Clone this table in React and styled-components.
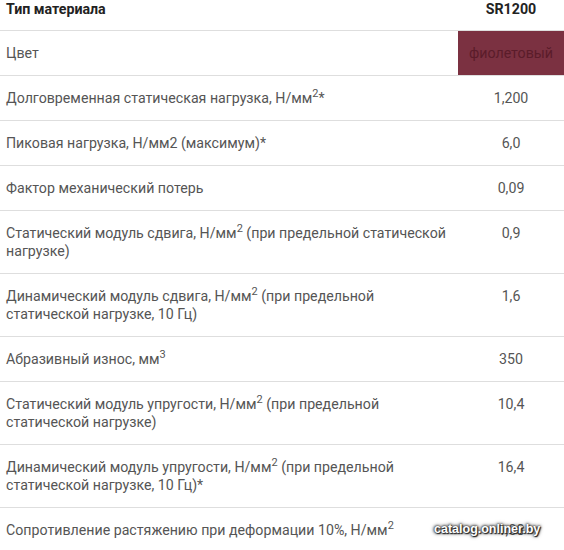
import React from 'react';
import styled, { createGlobalStyle } from 'styled-components';

const GlobalStyle = createGlobalStyle`
  html, body {
    margin: 0;
    padding: 0;
    background: #fff;
  }
  body {
    font-family: Roboto, "Liberation Sans", sans-serif;
  }
`;

const Page = styled.div`
  position: relative;
  width: 564px;
  height: 550px;
  overflow: hidden;
  background: #fff;
`;

const Table = styled.table`
  width: 564px;
  border-collapse: collapse;
  table-layout: fixed;
  font-size: 14.2px;
  line-height: 18px;
  color: #555;
`;

const HeadCell = styled.th`
  padding: 0 0 12px ${props => props.value ? '0' : '6px'};
  text-align: ${props => props.value ? 'center' : 'left'};
  font-weight: 700;
  color: #222;
  border-bottom: 1px solid #dedede;
`;

const Row = styled.tr`
  border-bottom: 1px solid #dedede;
`;

const NameCell = styled.td`
  padding: 13px 8px 13px 6px;
  vertical-align: top;
`;

const ValueCell = styled.td`
  padding: 13px 0;
  vertical-align: top;
  text-align: center;
  background: ${props => props.swatch || 'transparent'};
  color: ${props => props.swatch ? '#5a1c2a' : '#555'};
`;

const Sup = styled.sup`
  font-size: 11px;
  line-height: 0;
  vertical-align: 6px;
`;

const Watermark = styled.div`
  position: absolute;
  left: 434px;
  top: 522px;
  font-family: "Liberation Sans", Arial, sans-serif;
  font-weight: 700;
  font-size: 12.5px;
  line-height: 14px;
  color: #fff;
  text-shadow: 0 0 2px #222, 0 0 3px #333, 0 0 4px #444, 1px 1px 1px #111;
`;

const rows = [
  { name: <>Цвет</>, value: 'фиолетовый', swatch: '#7b3141' },
  { name: <>Долговременная статическая нагрузка, Н/мм<Sup>2</Sup>*</>, value: '1,200' },
  { name: <>Пиковая нагрузка, Н/мм2 (максимум)*</>, value: '6,0' },
  { name: <>Фактор механический потерь</>, value: '0,09' },
  { name: <>Статический модуль сдвига, Н/мм<Sup>2</Sup> (при предельной статической нагрузке)</>, value: '0,9' },
  { name: <>Динамический модуль сдвига, Н/мм<Sup>2</Sup> (при предельной статической нагрузке, 10 Гц)</>, value: '1,6' },
  { name: <>Абразивный износ, мм<Sup>3</Sup></>, value: '350' },
  { name: <>Статический модуль упругости, Н/мм<Sup>2</Sup> (при предельной статической нагрузке)</>, value: '10,4' },
  { name: <>Динамический модуль упругости, Н/мм<Sup>2</Sup> (при предельной статической нагрузке, 10 Гц)*</>, value: '16,4' },
  { name: <>Сопротивление растяжению при деформации 10%, Н/мм<Sup>2</Sup></>, value: '1,08' },
];

export default function App() {
  return (
    <Page>
      <GlobalStyle />
      <Table>
        <colgroup>
          <col style={{ width: 458 }} />
          <col style={{ width: 106 }} />
        </colgroup>
        <thead>
          <tr>
            <HeadCell>Тип материала</HeadCell>
            <HeadCell value>SR1200</HeadCell>
          </tr>
        </thead>
        <tbody>
          {rows.map((r, i) => (
            <Row key={i}>
              <NameCell>{r.name}</NameCell>
              <ValueCell swatch={r.swatch}>{r.value}</ValueCell>
            </Row>
          ))}
        </tbody>
      </Table>
      <Watermark>catalog.onliner.by</Watermark>
    </Page>
  );
}
